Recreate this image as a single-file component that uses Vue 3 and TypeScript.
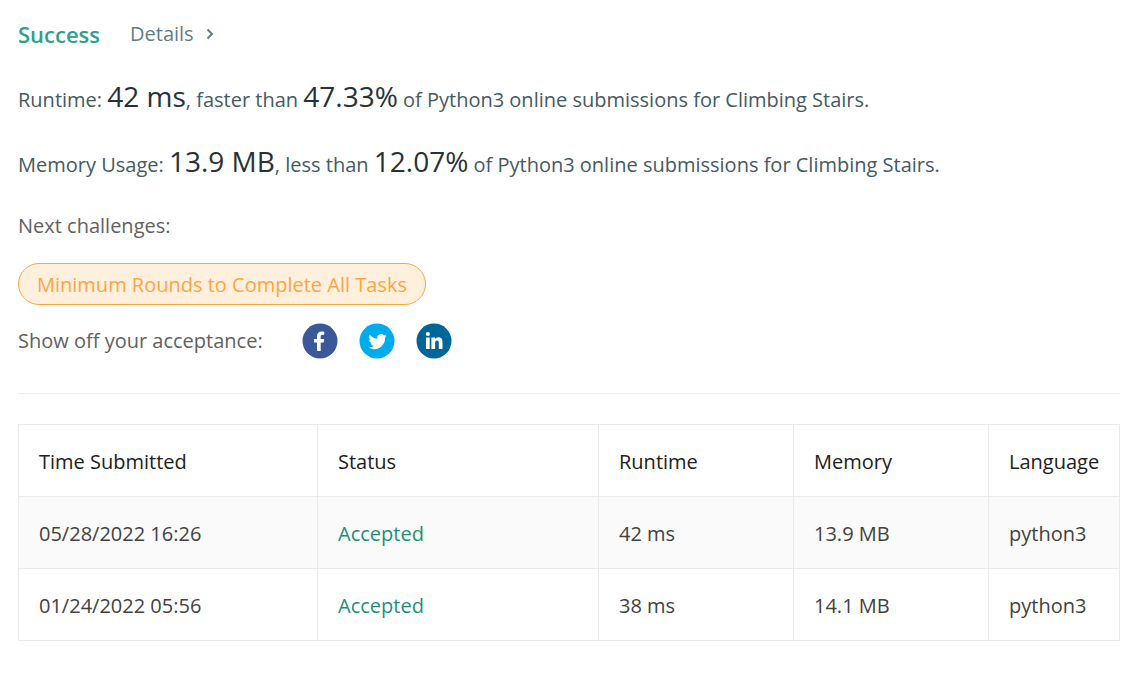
<script setup lang="ts">
interface Submission {
  time: string
  status: string
  runtime: string
  memory: string
  language: string
}

const submissions: Submission[] = [
  { time: '05/28/2022 16:26', status: 'Accepted', runtime: '42 ms', memory: '13.9 MB', language: 'python3' },
  { time: '01/24/2022 05:56', status: 'Accepted', runtime: '38 ms', memory: '14.1 MB', language: 'python3' },
]
</script>

<template>
  <main class="result">
    <header class="heading">
      <h1 class="success">Success</h1>
      <a class="details" href="#details">Details
        <svg class="chevron" viewBox="0 0 8 12" aria-hidden="true"><path d="M1.5 1.5 6 6l-4.500 4.500" /></svg>
      </a>
    </header>

    <p class="stat">Runtime: <strong>42 ms</strong>, faster than <strong>47.33%</strong> of Python3 online submissions for Climbing Stairs.</p>
    <p class="stat">Memory Usage: <strong>13.9 MB</strong>, less than <strong>12.07%</strong> of Python3 online submissions for Climbing Stairs.</p>

    <p class="next">Next challenges:</p>
    <a class="challenge" href="#challenge">Minimum Rounds to Complete All Tasks</a>

    <div class="share">
      <span class="share-label">Show off your acceptance:</span>
      <a class="social" href="#facebook" aria-label="Facebook">
        <svg viewBox="0 0 36 36"><circle cx="18" cy="18" r="17.5" fill="#3b5998" /><path fill="#fff" d="M15 28V19.500h-3V16h3v-2.600c0-3.200 1.800-4.900 4.700-4.900 1.300 0 2.200.1 2.500.2v3.100H20.500c-1.500 0-1.800.7-1.800 1.800V16h3.500l-.5 3.500h-3V28z" /></svg>
      </a>
      <a class="social" href="#twitter" aria-label="Twitter">
        <svg viewBox="0 0 36 36"><circle cx="18" cy="18" r="17.5" fill="#00aced" /><path fill="#fff" transform="translate(9.500 9.300) scale(.77)" d="M23.6 4.6c-.9.4-1.8.7-2.8.8 1-.6 1.800-1.600 2.200-2.700-1 .6-2 1-3.100 1.200a4.900 4.900 0 0 0-8.400 4.500A14 14 0 0 1 1.600 3.200a4.900 4.900 0 0 0 1.500 6.600c-.8 0-1.600-.2-2.200-.6v.1a4.900 4.900 0 0 0 3.900 4.800c-.7.2-1.500.2-2.200.1a4.900 4.900 0 0 0 4.600 3.400A9.900 9.900 0 0 1 0 19.600a14 14 0 0 0 21.500-12.400c.8-.7 1.600-1.500 2.100-2.600z" /></svg>
      </a>
      <a class="social" href="#linkedin" aria-label="LinkedIn">
        <svg viewBox="0 0 36 36"><circle cx="18" cy="18" r="17.5" fill="#006699" /><path fill="#fff" d="M10 14.500h3.700v11.500H10zM15.400 14.500H19v1.600c.7-1.100 1.800-1.900 3.300-1.900 3.500 0 4.200 2.300 4.200 5.300V26h-3.700v-5.500c0-1.300 0-3-1.700-3s-2 1.400-2 2.900V26h-3.700z" /><circle cx="11.850" cy="11" r="2.100" fill="#fff" /></svg>
      </a>
    </div>

    <hr class="divider">

    <table class="history">
      <colgroup>
        <col class="c-time"><col class="c-status"><col class="c-data"><col class="c-data"><col class="c-lang">
      </colgroup>
      <thead>
        <tr><th scope="col">Time Submitted</th><th scope="col">Status</th><th scope="col">Runtime</th><th scope="col">Memory</th><th scope="col">Language</th></tr>
      </thead>
      <tbody>
        <tr v-for="item in submissions" :key="item.time">
          <td>{{ item.time }}</td>
          <td><a class="accepted" href="#submission">{{ item.status }}</a></td>
          <td>{{ item.runtime }}</td>
          <td>{{ item.memory }}</td>
          <td>{{ item.language }}</td>
        </tr>
      </tbody>
    </table>
  </main>
</template>

<style>
body { background: #fff; }
</style>

<style scoped>
.result { padding: 16px 18px 40px; font-family: "Segoe UI", "Open Sans", "Noto Sans", sans-serif; font-size: 20px; line-height: 36px; color: #546e7a; }
a { text-decoration: none; }
.heading { display: flex; align-items: center; gap: 30px; padding-bottom: 3px; }
.success { margin: 0; font-size: 22px; font-weight: 600; color: #2fa08e; }
.details { display: flex; align-items: center; gap: 12px; color: #607d8b; }
.chevron { width: 8px; height: 12px; fill: none; stroke: currentColor; stroke-width: 2; }
.stat { margin: 24px 0 0; line-height: 41px; color: #455a64; }
.stat strong { font-size: 28px; font-weight: 400; line-height: 1; color: #263238; }
.next { margin: 23px 0 19px; color: #616161; }
.challenge { display: inline-block; box-sizing: border-box; height: 42px; padding: 3px 18px; border: 1px solid #f9a83f; border-radius: 21px; background: #fff0de; color: #ffa53f; }
.share { display: flex; align-items: center; color: #616161; margin-top: 18px; }
.share-label { margin-right: 39px; }
.social { display: block; width: 36px; height: 36px; margin-right: 21px; }
.social svg { display: block; width: 36px; height: 36px; }
.divider { height: 1px; margin: 34px 0 30px; border: 0; background: #eee; }
.history { width: 100%; table-layout: fixed; border-collapse: collapse; }
.history th, .history td { height: 72px; box-sizing: border-box; padding: 2px 20px 0; border: 1px solid #eaeaea; text-align: left; font-weight: 400; color: #424242; }
.history th { color: #212121; }
.history tbody tr:nth-child(odd) { background: #fafafa; }
.history .accepted { color: #1f8f7c; }
.c-time { width: 299px; }
.c-status { width: 281px; }
.c-data { width: 195px; }
</style>
